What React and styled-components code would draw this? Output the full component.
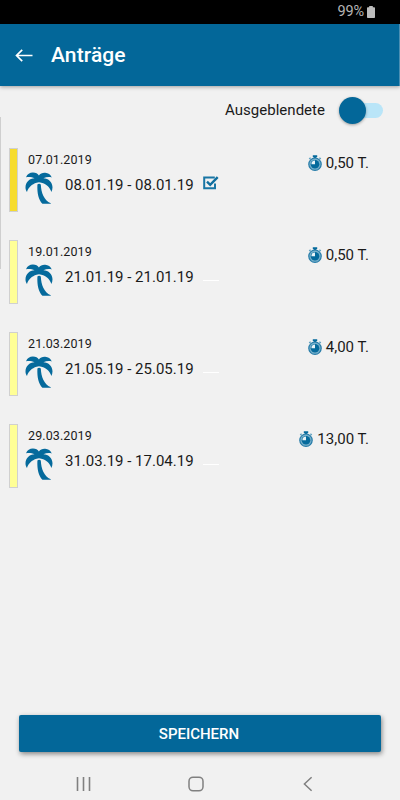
import React from "react";
import styled, { createGlobalStyle } from "styled-components";

const requests = [
  { date: "07.01.2019", range: "08.01.19 - 08.01.19", days: "0,50 T.", color: "#f6dc2e", done: true },
  { date: "19.01.2019", range: "21.01.19 - 21.01.19", days: "0,50 T.", color: "#ffff96" },
  { date: "21.03.2019", range: "21.05.19 - 25.05.19", days: "4,00 T.", color: "#ffff96" },
  { date: "29.03.2019", range: "31.03.19 - 17.04.19", days: "13,00 T.", color: "#ffff96" },
];

function PalmIcon() {
  return (
    <svg width="28" height="32" viewBox="0 0 28 32" fill="#056a9c">
      <path d="M1 5.2C2.4 2 5 .5 8 .6C10.8 .7 12.8 1.8 13.9 3.4C15.2 1.6 17.6 .6 20.2 .8C23.2 1 25.6 2.4 26.8 5.4C24.2 4.8 21 5 18.4 6.2C23.6 6.4 27.4 10.2 27.5 15.2C27.5 17 27.1 18.6 26.4 20C24.8 15.4 21.4 12 16.4 10.8C15 10 13 10 11.6 10.8C6.8 12.2 3.4 15.6 2 20C1 18.6 .4 17 .5 15.2C.6 10.2 4.4 6.4 9.6 6.2C7 5 4 4.8 1 5.2Z" />
      <path d="M12.4 12.4C13.2 11.6 15 11.6 15.8 12.4C16.2 20.6 18.8 28 25.8 31.2V31.8H17.4C13.6 27.4 12 21.4 12.4 12.4Z" />
    </svg>
  );
}

function StopwatchIcon() {
  return (
    <svg width="14" height="16" viewBox="0 0 14 16">
      <path d="M4.8 .2H9.2V2H8.4V4H5.6V2H4.8Z" fill="#056a9c" />
      <path d="M1.2 4.1L2.6 2.8M11.4 2.8L12.8 4.1" stroke="#5b9fbf" strokeWidth="1.3" />
      <circle cx="7" cy="9.2" r="6.2" fill="#78b0cb" stroke="#287da9" strokeWidth="1.2" />
      <circle cx="7" cy="9.2" r="4.3" fill="#056a9c" />
      <path d="M7 9.2V5.6A3.6 3.6 0 0 0 3.4 9.2Z" fill="#e9f3f7" />
    </svg>
  );
}

function CheckIcon() {
  return (
    <svg width="16" height="14" viewBox="0 0 16 14" fill="none">
      <path d="M11.8 1.5H1.2V12.2H12V7.5" stroke="#1976a5" strokeWidth="2" />
      <path d="M4 5.6L7.2 8.8L14.7 1.1" stroke="#116f9f" strokeWidth="2.4" />
    </svg>
  );
}

function App() {
  return (
    <Screen>
      <GlobalStyle />
      <StatusBar>
        99%
        <svg width="8" height="12" viewBox="0 0 8 12" fill="#bcbcbc">
          <path d="M2.2 0H5.8V1.3H7.2Q8 1.3 8 2.1V11.2Q8 12 7.2 12H.8Q0 12 0 11.2V2.1Q0 1.3 .8 1.3H2.2Z" />
        </svg>
      </StatusBar>
      <Toolbar>
        <svg width="18" height="13" viewBox="0 0 18 13" fill="none" stroke="#fff" strokeWidth="1.7">
          <path d="M17.5 6.5H1.5M7.2 .8L1.5 6.5L7.2 12.2" />
        </svg>
        <Title>Anträge</Title>
      </Toolbar>
      <Content>
        <ScrollThumb />
        <FilterRow>
          <FilterLabel>Ausgeblendete</FilterLabel>
          <Switch>
            <Knob />
          </Switch>
        </FilterRow>
        <List>
          {requests.map((item) => (
            <Request key={item.date}>
              <Marker $color={item.color} />
              <Info>
                <Created>{item.date}</Created>
                <Period>
                  <PalmIcon />
                  <Range>{item.range}</Range>
                  <Status>{item.done ? <CheckIcon /> : <Dash />}</Status>
                </Period>
              </Info>
              <Duration>
                <StopwatchIcon />
                <Days>{item.days}</Days>
              </Duration>
            </Request>
          ))}
        </List>
      </Content>
      <SaveButton>SPEICHERN</SaveButton>
      <NavBar>
        <svg width="16" height="16" viewBox="0 0 16 16" stroke="#808080" strokeWidth="1.6">
          <path d="M2.5 1V15M8.5 1V15M14.5 1V15" />
        </svg>
        <svg width="16" height="16" viewBox="0 0 16 16" fill="none" stroke="#808080" strokeWidth="1.5">
          <rect x="1" y="1.2" width="14" height="13.6" rx="4" />
        </svg>
        <svg width="16" height="16" viewBox="0 0 16 16" fill="none" stroke="#808080" strokeWidth="1.5">
          <path d="M11.6 1.2L4.4 8L11.6 14.8" />
        </svg>
      </NavBar>
    </Screen>
  );
}

const GlobalStyle = createGlobalStyle`
  body {
    margin: 0;
    background: #f1f1f1;
    font-family: Roboto, "Liberation Sans", sans-serif;
  }
`;

const Screen = styled.div`
  width: 400px;
  height: 800px;
  display: flex;
  flex-direction: column;
  overflow: hidden;
  background: #f1f1f1;
  color: #1a1a1a;
`;

const StatusBar = styled.div`
  height: 24px;
  flex: none;
  box-sizing: border-box;
  padding: 0 25px 1px 0;
  display: flex;
  justify-content: flex-end;
  align-items: center;
  gap: 3px;
  background: #000;
  color: #b4b4b4;
  font-size: 14.5px;
  letter-spacing: -0.1px;
`;

const Toolbar = styled.header`
  height: 62px;
  flex: none;
  box-sizing: border-box;
  padding-left: 15px;
  display: flex;
  align-items: center;
  gap: 18px;
  border-right: 1px solid #4b8fb3;
  background: #036799;
  color: #fff;
  box-shadow: 0 1px 4px rgba(0, 0, 0, 0.35);
`;

const Title = styled.h1`
  margin: 0;
  font-size: 21px;
  font-weight: 500;
  letter-spacing: 0.1px;
`;

const Content = styled.main`
  position: relative;
  flex: 1;
`;

const ScrollThumb = styled.div`
  position: absolute;
  left: 0;
  top: 31px;
  width: 1px;
  height: 152px;
  background: #cfcfcf;
`;

const FilterRow = styled.div`
  height: 48px;
  padding-right: 17px;
  display: flex;
  justify-content: flex-end;
  align-items: center;
  gap: 18px;
`;

const FilterLabel = styled.span`
  font-size: 15px;
  letter-spacing: 0.02px;
`;

const Switch = styled.div`
  width: 40px;
  height: 15px;
  border-radius: 8px;
  background: #b9e5f8;
  display: flex;
  align-items: center;
`;

const Knob = styled.div`
  width: 27px;
  height: 27px;
  margin-left: -4px;
  border-radius: 50%;
  background: #036799;
  box-shadow: 0 1px 3px rgba(0, 0, 0, 0.35);
`;

const List = styled.div`
  padding: 14px 31px 0 9px;
`;

const Request = styled.div`
  height: 92px;
  display: flex;
  align-items: flex-start;
`;

const Marker = styled.div`
  width: 9px;
  height: 64px;
  box-sizing: border-box;
  border: 1px solid #d0d0d0;
  background: ${(props) => props.$color};
`;

const Info = styled.div`
  flex: 1;
  padding: 4px 0 0 7px;
`;

const Created = styled.div`
  height: 16px;
  margin-left: 3px;
  font-size: 12.5px;
  line-height: 16px;
  letter-spacing: 0.1px;
`;

const Period = styled.div`
  margin-top: 4px;
  display: flex;
  align-items: flex-start;
`;

const Range = styled.span`
  width: 138px;
  margin-left: 12px;
  font-size: 15px;
  line-height: 26px;
  white-space: nowrap;
`;

const Status = styled.div`
  height: 22px;
  padding-top: 3px;
  box-sizing: border-box;
`;

const Dash = styled.div`
  width: 16px;
  height: 1px;
  margin-top: 13px;
  background: #fff;
`;

const Duration = styled.div`
  height: 30px;
  display: flex;
  align-items: center;
  gap: 4px;
`;

const Days = styled.span`
  font-size: 15px;
  letter-spacing: 0.05px;
`;

const SaveButton = styled.button`
  height: 37px;
  flex: none;
  margin: 0 19px;
  padding: 0 2px 0 0;
  border: 0;
  border-radius: 2px;
  background: #036799;
  color: #fff;
  font-family: inherit;
  font-size: 15px;
  font-weight: 500;
  box-shadow: 1px 2px 5px rgba(0, 0, 0, 0.45);
`;

const NavBar = styled.nav`
  height: 48px;
  flex: none;
  box-sizing: border-box;
  padding: 16px 84px 0 75px;
  display: flex;
  align-items: center;
  justify-content: space-between;
`;

export default App;
